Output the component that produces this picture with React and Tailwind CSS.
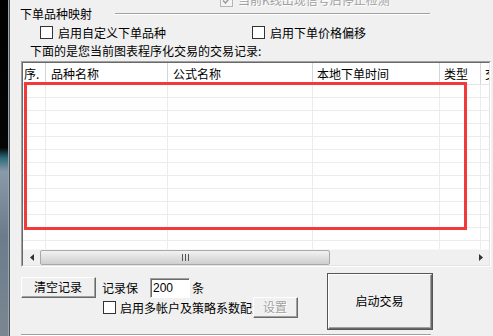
const Check = ({ checked = false, disabled = false }) => (
  <span
    className={`w-[13px] h-[13px] shrink-0 border flex items-center justify-center ${
      disabled ? "border-[#b5b5b5] bg-[#f4f4f4]" : "border-[#333] bg-white"
    }`}
  >
    {checked && (
      <svg width="9" height="9" viewBox="0 0 9 9">
        <path d="M1 4.5 L3.5 7 L8 1.5" fill="none" stroke={disabled ? "#a0a0a0" : "#222"} strokeWidth="1.6" />
      </svg>
    )}
  </span>
);

const Btn = ({ children, className = "", disabled = false, isDefault = false }) => (
  <div className={`${isDefault ? "border border-[#555]" : ""} ${className}`}>
    <div className="w-full h-full border-t border-l border-white border-r border-b border-r-[#696969] border-b-[#696969]">
      <div
        className={`w-full h-full border-r border-b border-[#a0a0a0] bg-[#f0f0f0] flex items-center justify-center ${
          disabled ? "text-[#a0a0a0] [text-shadow:1px_1px_0_#fff]" : "text-black"
        }`}
      >
        {children}
      </div>
    </div>
  </div>
);

const cols = [
  { w: "w-[23px]", label: "序.", pad: "pl-[1px]" },
  { w: "w-[122px]", label: "品种名称", pad: "pl-[5px]" },
  { w: "w-[145px]", label: "公式名称", pad: "pl-[5px]" },
  { w: "w-[127px]", label: "本地下单时间", pad: "pl-[4px]" },
  { w: "w-[41px]", label: "类型", pad: "pl-[4px]" },
  { w: "w-[40px]", label: "交易", pad: "pl-[4px]" },
];

const rows = Array.from({ length: 13 });

const App = () => {
  return (
    <div className="w-[493px] h-[336px] overflow-hidden flex bg-[#f0f0f0] text-[12px] leading-[12px] text-black font-['Noto_Sans_CJK_SC','Liberation_Sans',sans-serif]">
      {/* left edge of the neighbouring window */}
      <div className="w-[8px] shrink-0 bg-[linear-gradient(to_bottom,#000_0%,#050505_44%,#2a6a7a_47%,#8a9aaa_51%,#6c7c8c_70%,#7a8792_100%)]" />
      <div className="w-px shrink-0 bg-[#9aa6b2]" />
      <div className="w-px shrink-0 bg-[#505050]" />

      <div className="flex-1 flex flex-col">
        {/* clipped option at the very top */}
        <div className="h-[8px] flex">
          <div className="-mt-[7px] ml-[210px] h-[14px] flex items-center gap-[5px] text-[#a0a0a0] [text-shadow:1px_1px_0_#fff] whitespace-nowrap">
            <Check checked disabled />
            <span>当前K线出现信号后停止检测</span>
          </div>
        </div>

        {/* group title */}
        <div className="h-[12px] flex items-center">
          <span className="ml-[10px] whitespace-nowrap">下单品种映射</span>
          <div className="ml-[23px] w-[315px] h-[2px] -mt-[1px] border-t border-[#a0a0a0] border-b border-b-white" />
        </div>

        {/* options */}
        <div className="mt-[6px] h-[13px] flex items-center whitespace-nowrap">
          <div className="ml-[30px] w-[212px] flex items-center gap-[5px]">
            <Check />
            <span>启用自定义下单品种</span>
          </div>
          <div className="flex items-center gap-[5px]">
            <Check />
            <span>启用下单价格偏移</span>
          </div>
        </div>

        <div className="mt-[6px] h-[12px] ml-[20px] whitespace-nowrap">下面的是您当前图表程序化交易的交易记录:</div>

        {/* trade list */}
        <div className="mt-[4px] ml-[11px] w-[470px] border-t border-l border-[#a0a0a0] border-r border-b border-r-white border-b-white relative">
          <div className="border-t border-l border-[#696969] border-r border-b border-r-[#e3e3e3] border-b-[#e3e3e3] bg-white overflow-hidden">
            <div className="h-[22px] flex border-b border-[#e5e5e5] whitespace-nowrap">
              {cols.map((c) => (
                <div key={c.label} className={`${c.w} ${c.pad} shrink-0 h-full border-r border-[#d5d5d5] flex items-center overflow-hidden`}>
                  {c.label}
                </div>
              ))}
            </div>
            <div className="h-[164px] overflow-hidden">
              {rows.map((_, i) => (
                <div key={i} className="h-[13px] flex border-b border-[#ececec]">
                  {cols.map((c) => (
                    <div key={c.label} className={`${c.w} shrink-0 h-full border-r border-[#ececec]`} />
                  ))}
                </div>
              ))}
            </div>
            {/* horizontal scrollbar */}
            <div className="h-[16px] flex bg-[#f0f0f0] border-t border-[#f7f7f7]">
              <div className="w-[17px] flex items-center justify-center">
                <svg width="4" height="7" viewBox="0 0 4 7">
                  <path d="M4 0 L0 3.5 L4 7 Z" fill="#333" />
                </svg>
              </div>
              <div className="w-[290px] h-[15px] rounded-[2px] border border-[#a8a8a8] bg-[linear-gradient(to_bottom,#f2f2f2,#e0e0e0_50%,#cfcfcf)] flex items-center justify-center">
                <svg width="7" height="7" viewBox="0 0 7 7">
                  <path d="M0.5 0 V7 M3.5 0 V7 M6.5 0 V7" stroke="#555" strokeWidth="1" />
                </svg>
              </div>
              <div className="flex-1" />
              <div className="w-[17px] flex items-center justify-center">
                <svg width="4" height="7" viewBox="0 0 4 7">
                  <path d="M0 0 L4 3.5 L0 7 Z" fill="#333" />
                </svg>
              </div>
            </div>
          </div>
          {/* red annotation frame */}
          <div className="absolute left-[2px] top-[20px] w-[443px] h-[148px] border-[3px] border-[#f23a3a] pointer-events-none" />
        </div>

        {/* bottom controls */}
        <div className="mt-[6px] flex whitespace-nowrap">
          <div className="ml-[11px] w-[306px] flex flex-col">
            <div className="mt-[4px] h-[21px] flex items-center">
              <Btn className="w-[75px] h-[21px]">清空记录</Btn>
              <span className="ml-[6px]">记录保</span>
              <div className="ml-[12px] w-[40px] h-[20px] border-t border-l border-[#a0a0a0] border-r border-b border-r-white border-b-white">
                <div className="w-full h-full border-t border-l border-[#696969] bg-white flex items-center pl-[1px] font-['Liberation_Sans',sans-serif] text-[12px]">
                  200
                </div>
              </div>
              <span className="ml-[2px]">条</span>
            </div>
            <div className="-mt-px h-[21px] flex items-center">
              <div className="ml-[82px] w-[150px] flex items-center gap-[4px] overflow-hidden">
                <Check />
                <span>启用多帐户及策略系数配置</span>
              </div>
              <Btn className="w-[45px] h-[21px]" disabled>
                设置
              </Btn>
            </div>
          </div>
          <Btn className="w-[106px] h-[57px]" isDefault>
            启动交易
          </Btn>
        </div>

        <div className="mt-[4px] ml-[11px] w-[410px] h-[2px] border-t border-[#a0a0a0] border-b border-b-white" />
      </div>
    </div>
  );
};

export default App;
